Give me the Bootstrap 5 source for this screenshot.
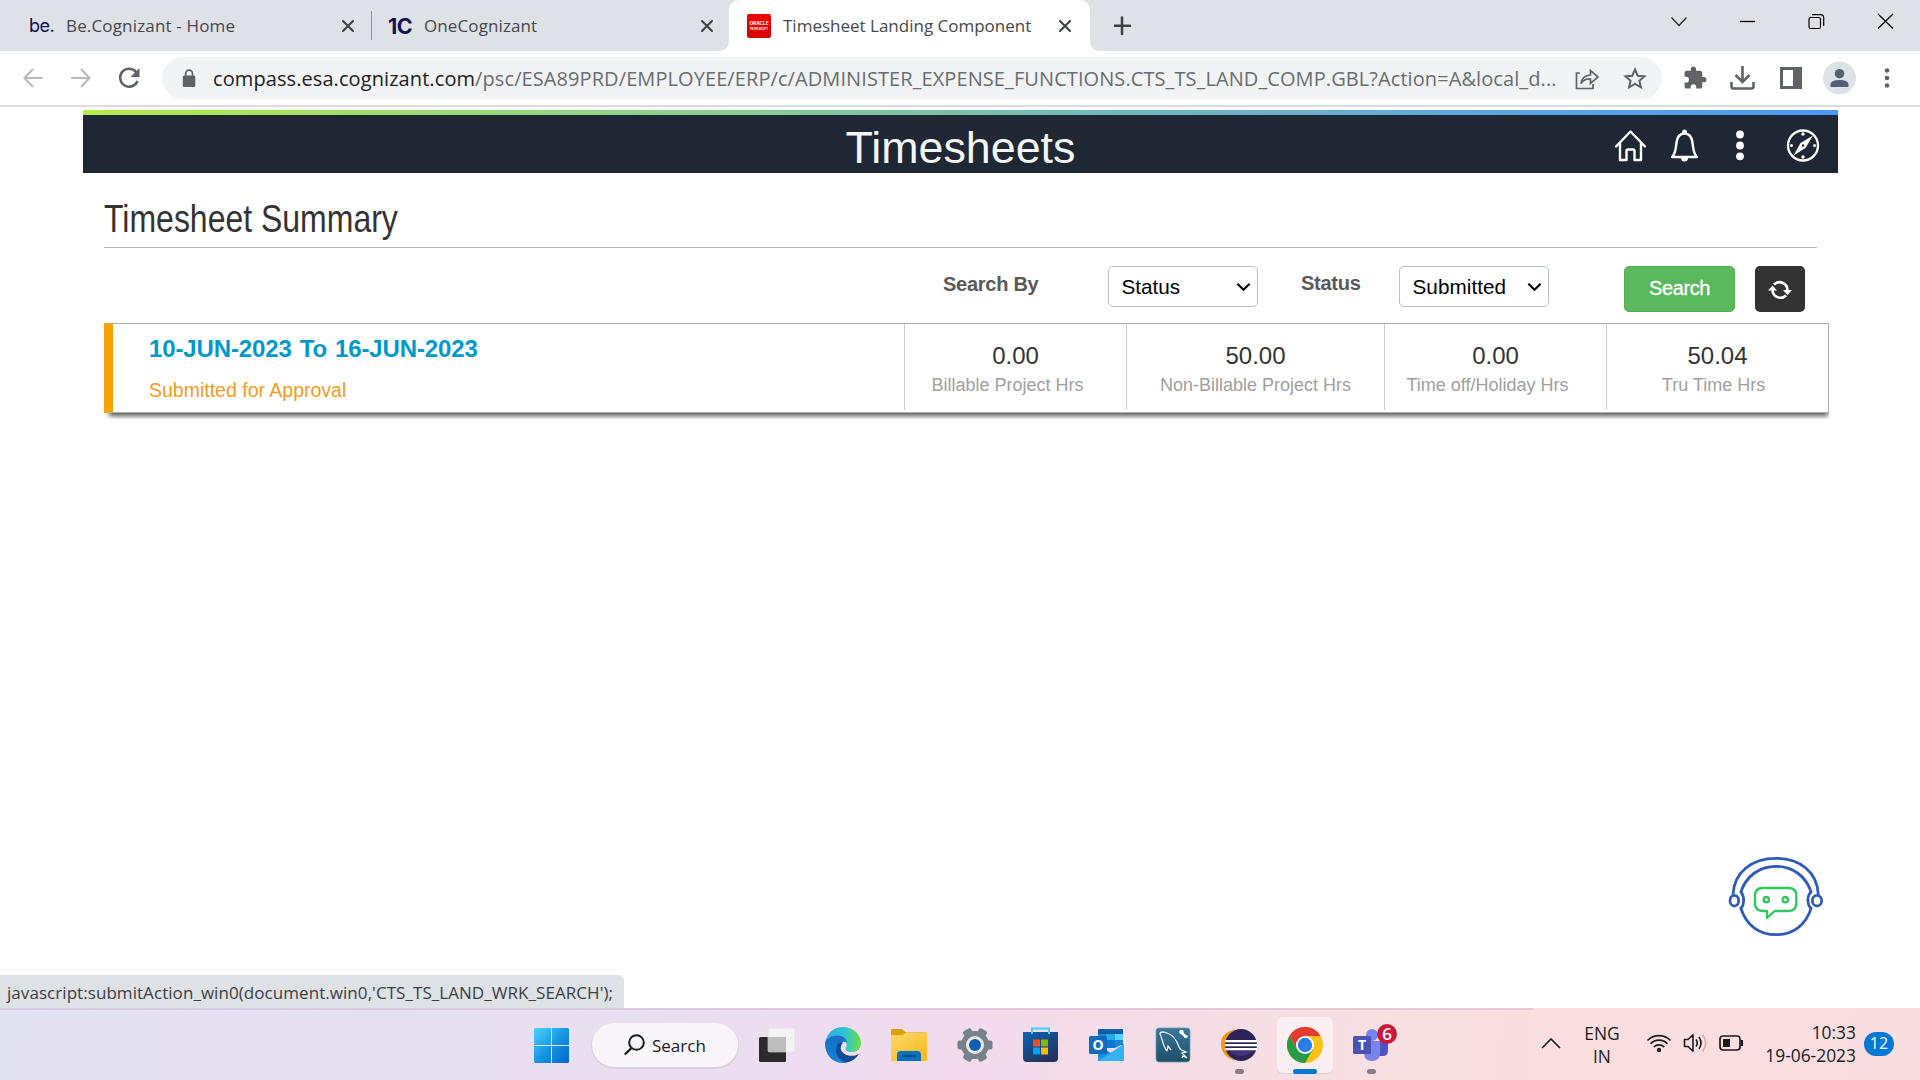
<!DOCTYPE html>
<html lang="en">
<head>
<meta charset="utf-8">
<title>Timesheet Landing Component</title>
<link href="https://cdn.jsdelivr.net/npm/bootstrap@5.3.0/dist/css/bootstrap.min.css" rel="stylesheet">
<style>
:root{--ui:"Open Sans","Noto Sans",sans-serif;--arial:"Liberation Sans",Arial,sans-serif}
body{width:1920px;height:1080px;overflow:hidden;background:#fff;font-family:var(--arial);line-height:1;white-space:nowrap}
svg{display:block;flex:none}
.ln{display:block;flex:none}
/* browser tabs */
.tabstrip{height:51px;background:#dee1e6;font-family:var(--ui);font-size:17px;color:#45484c}
.tab{height:51px;line-height:50px;flex:none}
.tab-a{width:371px;padding:0 15px 0 29px}
.tab-a .ttl{letter-spacing:.16px}
.tab-b{width:358px;padding:0 15px 0 16px}
.tab-b .ttl{letter-spacing:.1px}
.tab-c{width:361px;padding:0 17px 0 18px;background:#fff;border-radius:10px 10px 0 0;position:relative;margin-left:-1px}
.tab-c::before,.tab-c::after{content:"";position:absolute;bottom:0;width:9px;height:9px}
.tab-c::before{left:-9px;background:radial-gradient(circle at 0 0,transparent 8.5px,#fff 9px)}
.tab-c::after{right:-9px;background:radial-gradient(circle at 100% 0,transparent 8.5px,#fff 9px)}
.tabsep{width:1px;height:29px;background:#8e9196;flex:none}
.logo-be{font-family:Inter,sans-serif;font-size:18px;letter-spacing:-.5px;color:#0a0a55;width:37px;flex:none}
.logo-1c{font-family:Inter,sans-serif;font-weight:700;font-size:21.5px;letter-spacing:-.6px;color:#14124f;width:36px;flex:none}
.fav{width:24px;height:24px;border-radius:2px;background:linear-gradient(#f30000,#d60000);color:#fff;margin-right:12px;flex:none}
.winbtn{width:69px;height:42px;flex:none}
/* toolbar */
.toolbar{height:56px;border-bottom:2px solid #dadce0;padding-left:9px;padding-right:9px}
.tb-btn{width:48px;flex:none}
.omni{width:1500px;height:42px;border-radius:21px;background:#f1f3f4;margin-left:9px;padding-left:19px;padding-right:3px;font-family:var(--ui);font-size:20px;color:#6a6d71}
.omni b{font-weight:400;color:#202124}
.url{letter-spacing:.085px;line-height:40px;padding-top:1px}
/* page header */
.pshead{margin:3px 82px 0 83px;height:63px;background:#1e2733;border-top:5px solid transparent;border-image:linear-gradient(90deg,#b4ec4b,#8ed08a 32%,#6fb3c4 64%,#4b97ff) 1;position:relative}
.pshead h1{font-size:44.8px;line-height:58px;color:#f5f5f5;margin:0;padding-top:3px}
.hdicons{position:absolute;right:18px;top:1px;height:58px}
.wrapper{padding:0 91px 0 104px}
.sumtitle{height:75px;width:1713px;border-bottom:1px solid #b4b4b8;color:#333}
.sumtitle h2{font-size:39px;line-height:44px;margin:0;padding-top:24px;transform:scaleX(.82);transform-origin:0 0;display:inline-block}
.filters{height:75px;padding-top:18px;padding-left:839px;font-size:20px;color:#000}
.flabel{font-weight:700;color:#595959;line-height:36px;letter-spacing:-.27px}
.flabel-by{width:165px}
.flabel-st{width:98px;margin-left:43px;line-height:34px}
.fsel{width:150px;height:41px;border:1px solid #b9c0ca;border-radius:5px;padding:0 6px 0 12.500px;line-height:39px;background:#fff;color:#000;font-size:20.7px}
.fsel .clip{overflow:hidden;width:99.500px;letter-spacing:.05px}
.btn-find{width:111px;height:46px;margin-left:75px;background:#5cb85c;border:1px solid #4cae4c;border-radius:5px;color:#fff;font-size:20px;line-height:1;padding:0 0 2px;-webkit-text-stroke:.3px #fff;letter-spacing:-.4px}
.btn-again{width:50px;height:46px;margin-left:20px;background:#333;border-radius:5px;border:0;padding:2px 0 0}
.tscard{width:1725px;height:90px;border:1px solid #adadb0;border-left:9px solid #f5a206;box-shadow:2px 6px 5px -3px #555;clip-path:inset(0 0 -6px 0)}
.period{width:791px;padding-left:36px;flex:none}
.period .dates{font-size:24px;font-weight:700;color:#09c;line-height:28px;padding-top:11px;letter-spacing:-.13px;word-spacing:1.500px}
.period .state{font-size:19.5px;color:#f39c1e;line-height:22px;padding-top:16px}
.hrs{border-left:1px solid #ccc;height:86px;text-align:center;flex:none;width:222px}
.hrs-w{width:258px}
.hrs .num{font-size:24px;color:#333;line-height:28px;padding-top:18px}
.hrs .cap{font-size:18px;color:#a0a0a0;line-height:22px;padding-top:4px}
.off-l{padding-right:16px}
.off-s{padding-right:8px}
.bot{position:absolute;left:1700px;top:840px}
.statusbub{position:absolute;left:0;top:975px;width:624px;height:33px;background:#dee1e5;border-top-right-radius:6px;font-family:var(--ui);font-size:17px;line-height:35px;color:#3c4043;padding-left:7px;letter-spacing:.06px}
/* taskbar */
.taskbar{position:absolute;left:0;top:1008px;width:1920px;height:72px;padding-left:534px;background:linear-gradient(97deg,#e3e2f3 0,#e6dff2 20%,#e8dff0 33%,#eedcf0 43%,#f3dbec 50%,#f4dde6 60%,#f7dfe2 72%,#fbdee0 84%,#f9dee1 100%);font-family:var(--ui);color:#1b1b1b}
.taskbar::before{content:"";position:absolute;left:0;top:0;width:1533px;height:2px;background:rgba(120,80,130,.14)}
.tkrow{margin-left:14px}
.tk{width:66px;height:72px;padding-top:2px;flex:none;position:relative}
.dn{margin-top:2px}
.pill{width:146px;height:44px;border-radius:22px;background:#f8f5fb;box-shadow:0 1px 0 1px #dccfe4;margin:2px 21px 0 23px;padding-left:32px;font-size:17px;flex:none}
.pill span{line-height:44px;padding-top:2px}
.run{position:absolute;left:29px;bottom:6px;width:9px;height:5px;border-radius:3px;background:#8b7c83}
.run-on{left:21px;width:24px;background:#0078d4}
.activebox{width:56px;height:56px;border-radius:6px;background:#fbeff3;box-shadow:0 1px 1px #e0ccd4}
.tbadge{position:absolute;left:39px;top:16px;width:20px;height:20px;border-radius:50%;background:#c9183c;color:#fff;font-size:17px;font-weight:600;line-height:19px;text-align:center}
.tray{font-size:17.4px;line-height:23px;margin-left:137px}
.lang{width:40px;margin-left:21px;padding-top:1px}
.tri{position:relative;top:-1px}
.clock{width:111px}
.notif{width:30px;height:24px;border-radius:12px;margin-left:8px;background:#0078d4;color:#fff;font-size:16px;line-height:23px;text-align:center}
</style>
<script src="https://cdn.jsdelivr.net/npm/bootstrap@5.3.0/dist/js/bootstrap.bundle.min.js"></script>
</head>
<body class="position-relative">
<svg width="0" height="0" class="position-absolute"><defs>
<symbol id="x" viewBox="0 0 16 16"><path d="M3 3L13 13M13 3L3 13" stroke="#3c4043" stroke-width="2.1" fill="none" stroke-linecap="round"/></symbol>
<symbol id="chev" viewBox="0 0 16 10"><path d="M1.5 1.5L8 8L14.5 1.5" stroke="#000" stroke-width="2.2" fill="none"/></symbol>
</defs></svg>

<div class="tabstrip d-flex align-items-start">
  <div class="tab tab-a d-flex align-items-center"><span class="logo-be">be.</span><span class="ttl">Be.Cognizant - Home</span><svg class="ms-auto" width="16" height="16"><use href="#x"/></svg></div>
  <div class="tabsep align-self-center"></div>
  <div class="tab tab-b d-flex align-items-center"><span class="logo-1c">1C</span><span class="ttl">OneCognizant</span><svg class="ms-auto" width="16" height="16"><use href="#x"/></svg></div>
  <div class="tab tab-c d-flex align-items-center"><svg class="fav" viewBox="0 0 24 24" fill="#fff" font-family="Inter" font-size="4.600" font-weight="700" text-anchor="middle"><text x="12" y="10.500" textLength="19" lengthAdjust="spacingAndGlyphs">ORACLE</text><text x="12" y="16" font-size="3.600" textLength="18" lengthAdjust="spacingAndGlyphs">PEOPLESOFT</text></svg><span>Timesheet Landing Component</span><svg class="ms-auto" width="16" height="16"><use href="#x"/></svg></div>
  <svg width="20" height="51" class="ms-4" viewBox="0 0 20 51"><path d="M8 17.500V34M0 25.700H16" stroke="#3c4043" stroke-width="2.500" stroke-linecap="round"/></svg>
  <div class="d-flex ms-auto">
    <svg class="winbtn" viewBox="0 0 69 42"><path d="M27.500 17.500L35 25.500L42.500 17.500" fill="none" stroke="#222" stroke-width="1.2"/></svg>
    <svg class="winbtn" viewBox="0 0 69 42"><path d="M27 21.500H42" stroke="#000" stroke-width="1.3"/></svg>
    <svg class="winbtn" viewBox="0 0 69 42"><g fill="none" stroke="#000" stroke-width="1.2"><rect x="27" y="17.500" width="11.500" height="11" rx="1.800"/><path d="M30 14.600H38.500Q41.700 14.600 41.700 18V26"/></g></svg>
    <svg class="winbtn" viewBox="0 0 69 42"><path d="M27 14L42 28.500M42 14L27 28.500" stroke="#000" stroke-width="1.2"/></svg>
  </div>
</div>

<div class="toolbar d-flex align-items-center">
  <svg class="tb-btn" height="54" viewBox="0 0 48 54"><path d="M34 27H16M24 18L15.500 27L24 36" fill="none" stroke="#babcbe" stroke-width="2.2"/></svg>
  <svg class="tb-btn" height="54" viewBox="0 0 48 54"><path d="M14 27H32M24 18L32.500 27L24 36" fill="none" stroke="#babcbe" stroke-width="2.2"/></svg>
  <svg class="tb-btn" height="54" viewBox="0 0 48 54"><path d="M31.500 21.500A9 9 0 1 0 32.500 30" fill="none" stroke="#5f6368" stroke-width="2.500"/><path d="M34.500 17V26H25.500Z" fill="#5f6368"/></svg>
  <div class="omni d-flex align-items-center">
    <svg width="32" height="42" viewBox="0 0 32 42"><rect x="1.800" y="18.500" width="12.500" height="11.500" rx="1.500" fill="#5f6368"/><path d="M4.700 19V16.500A3.400 3.400 0 0 1 11.500 16.500V19" fill="none" stroke="#5f6368" stroke-width="1.700"/></svg>
    <span class="url"><b>compass.esa.cognizant.com</b>/psc/ESA89PRD/EMPLOYEE/ERP/c/ADMINISTER_EXPENSE_FUNCTIONS.CTS_TS_LAND_COMP.GBL?Action=A&amp;local_d...</span>
    <svg class="ms-auto" width="48" height="42" viewBox="0 0 48 42"><g fill="none" stroke="#5f6368" stroke-width="1.700"><path d="M17 16H13.500V31.500H30V27"/><path d="M18 26.500Q19 18.500 27.500 18V13.500L35 20L27.500 26.500V22Q21.500 21.500 18 26.500Z"/></g></svg>
    <svg width="48" height="42" viewBox="0 0 48 42"><path d="M24 12.500L26.700 18.700L33.500 19.300L28.400 23.800L29.900 30.300L24 26.900L18.100 30.300L19.600 23.800L14.500 19.300L21.300 18.700Z" fill="none" stroke="#5f6368" stroke-width="2"/></svg>
  </div>
  <svg width="48" height="42" class="ms-2" viewBox="0 0 48 42"><path transform="translate(12.500 8.500) scale(1.040 1.050)" d="M20.500 11H19V7c0-1.100-.9-2-2-2h-4V3.500a2.500 2.500 0 0 0-5 0V5H4c-1.100 0-2 .9-2 2v3.800h1.500a2.700 2.700 0 0 1 0 5.400H2V20c0 1.100.9 2 2 2h3.800v-1.500a2.700 2.700 0 0 1 5.400 0V22H17c1.100 0 2-.9 2-2v-4h1.500a2.500 2.500 0 0 0 0-5z" fill="#5f6368"/></svg>
  <svg width="48" height="42" viewBox="0 0 48 42"><path d="M24.500 9V24M17.500 18L24.500 25L31.500 18M13.500 25V29.500Q13.500 31.500 15.500 31.500H33.500Q35.500 31.500 35.500 29.500V25" fill="none" stroke="#5f6368" stroke-width="2.600"/></svg>
  <svg width="48" height="42" viewBox="0 0 48 42"><path d="M14 10H36V32H14ZM17 13V29H27V13Z" fill="#5f6368" fill-rule="evenodd"/></svg>
  <svg width="48" height="42" viewBox="0 0 48 42"><circle cx="25.500" cy="21" r="16.500" fill="#dee1e6"/><circle cx="25.500" cy="16.700" r="4.800" fill="#565e71"/><path d="M16.500 30V27.500Q16.500 23 25.500 23T34.500 27.500V30Z" fill="#565e71"/></svg>
  <svg width="48" height="42" viewBox="0 0 48 42"><g fill="#5f6368"><circle cx="25" cy="13.500" r="2.300"/><circle cx="25" cy="21" r="2.300"/><circle cx="25" cy="28.500" r="2.300"/></g></svg>
</div>

<header class="pshead">
  <h1 class="text-center fw-normal">Timesheets</h1>
  <div class="hdicons d-flex align-items-center">
    <svg width="33" height="33" viewBox="0 0 33 33" style="margin-right:23px"><path d="M2 17.500L16.500 2.500L31 17.500M6 14V31H12.500V22Q12.500 20.500 14 20.500H19Q20.500 20.500 20.500 22V31H27V14" fill="none" stroke="#fff" stroke-width="2.400" stroke-linejoin="round" stroke-linecap="round"/></svg>
    <svg width="29" height="33" viewBox="0 0 29 33" style="margin-right:36px"><path d="M2 28C6 24 5.500 20 6.500 13.500C7.500 6.500 10.500 4.500 14.500 4.500S21.500 6.500 22.500 13.500C23.500 20 23 24 27 28Z" fill="none" stroke="#fff" stroke-width="2.400" stroke-linejoin="round"/><circle cx="14.500" cy="3" r="2.500" fill="#fff"/><path d="M11 29A3.500 3.500 0 0 0 18 29Z" fill="#fff"/></svg>
    <svg width="9" height="33" viewBox="0 0 9 33" style="margin-right:42px"><g fill="#fff"><circle cx="5" cy="5.500" r="3.900"/><circle cx="5" cy="16.500" r="3.900"/><circle cx="5" cy="27.300" r="3.900"/></g></svg>
    <svg width="34" height="34" viewBox="0 0 34 34"><circle cx="17" cy="17.500" r="15" fill="none" stroke="#fff" stroke-width="2.300"/><path d="M27 7.500L19.500 20L7.500 27.500L14.500 15Z" fill="#fff"/><circle cx="17" cy="17.500" r="1.200" fill="#1e2733"/><g fill="#fff"><circle cx="17" cy="6" r="1.700"/><circle cx="17" cy="29" r="1.700"/><circle cx="5.500" cy="17.500" r="1.500"/><circle cx="28.500" cy="17.500" r="1.500"/></g></svg>
  </div>
</header>

<main class="wrapper">
  <div class="sumtitle"><h2 class="fw-normal">Timesheet Summary</h2></div>
  <div class="filters d-flex align-items-start">
    <div class="flabel flabel-by">Search By</div>
    <div class="fsel d-flex align-items-center justify-content-between"><span class="ln">Status</span><svg width="15" height="10"><use href="#chev"/></svg></div>
    <div class="flabel flabel-st">Status</div>
    <div class="fsel d-flex align-items-center justify-content-between"><span class="ln clip">Submitted for Approval</span><svg width="15" height="10"><use href="#chev"/></svg></div>
    <button class="btn btn-find">Search</button>
    <button class="btn btn-again d-flex align-items-center justify-content-center"><svg width="26" height="26" viewBox="0 0 26 26"><path d="M7 7.500A8 8 0 0 1 20.500 13.500M19 18.500A8 8 0 0 1 5.500 13" fill="none" stroke="#fff" stroke-width="2.600"/><path d="M1 13.500L5.500 8.500L10 13.500ZM16 13H25L20.500 18Z" fill="#fff"/></svg></button>
  </div>
  <div class="tscard d-flex">
    <div class="period"><div class="dates">10-JUN-2023 To 16-JUN-2023</div><div class="state">Submitted for Approval</div></div>
    <div class="hrs"><div class="num">0.00</div><div class="cap off-l">Billable Project Hrs</div></div>
    <div class="hrs hrs-w"><div class="num">50.00</div><div class="cap">Non-Billable Project Hrs</div></div>
    <div class="hrs"><div class="num">0.00</div><div class="cap off-l">Time off/Holiday Hrs</div></div>
    <div class="hrs"><div class="num">50.04</div><div class="cap off-s">Tru Time Hrs</div></div>
  </div>
</main>

<svg class="bot" width="150" height="120" viewBox="0 0 450 360"><g fill="none" stroke="#2f5bb5" stroke-width="8.500"><path d="M99 164C102 96 156 55 228 55S352 96 355 164"/><path d="M122 158C138 108 178 79 228 79S318 108 334 158M122 203C138 256 178 284 228 284S318 256 334 203"/><path d="M121 155C134 165 134 196 121 206M335 155C320 165 320 196 335 206"/><ellipse cx="103" cy="182" rx="13" ry="16"/><ellipse cx="351" cy="182" rx="14" ry="16"/></g><g fill="none" stroke="#31c75f" stroke-width="7"><path d="M188 144H266Q289 144 289 167V190Q289 213 266 213H224L201 234V213H188Q165 213 165 190V167Q165 144 188 144Z" stroke-linejoin="round"/><circle cx="199" cy="179" r="8"/><circle cx="256" cy="179" r="8"/></g></svg>

<div class="statusbub">javascript:submitAction_win0(document.win0,'CTS_TS_LAND_WRK_SEARCH');</div>

<footer class="taskbar d-flex align-items-center">
  <svg class="dn" width="35" height="35" viewBox="0 0 35 35"><defs><linearGradient id="w" gradientUnits="userSpaceOnUse" x1="0" y1="0" x2="35" y2="35"><stop offset="0" stop-color="#4fd4ff"/><stop offset=".5" stop-color="#1796e4"/><stop offset="1" stop-color="#0067c8"/></linearGradient></defs><path d="M1 0H17V17H0V1ZM18 0H34L35 1V17H18ZM0 18H17V35H1L0 34ZM18 18H35V34L34 35H18Z" fill="url(#w)"/></svg>
  <div class="pill d-flex align-items-center"><svg width="28" height="44" viewBox="0 0 28 44"><circle cx="12.500" cy="19.500" r="7.300" fill="none" stroke="#1b1b1b" stroke-width="2"/><path d="M7.500 25L.8 31.500" stroke="#1b1b1b" stroke-width="2.200"/></svg><span>Search</span></div>
  <svg class="dn" width="37" height="35" viewBox="0 0 37 35"><rect x="0" y="9" width="27" height="25" rx="1.500" fill="#2a2a2a"/><rect x="9" y="0" width="27" height="24" rx="1.500" fill="#f4f4f4" stroke="#ddd" stroke-width=".6"/><rect x="9" y="9" width="18" height="15" fill="#bdbdbd"/></svg>
  <div class="tkrow d-flex">
  <div class="tk d-flex align-items-center justify-content-center"><svg width="36" height="36" viewBox="0 0 36 36"><defs><linearGradient id="e1"><stop offset="0" stop-color="#2fb1ec"/><stop offset=".55" stop-color="#2cc3d0"/><stop offset="1" stop-color="#6be13f"/></linearGradient><linearGradient id="e2" x1="0" y1="0" x2="0" y2="1"><stop offset="0" stop-color="#1b6fc4"/><stop offset="1" stop-color="#0a84dc"/></linearGradient></defs><path d="M0 17C1 7 8 0 18 0C29 0 36 8 36 16C36 22 32 25 27 25C22 25 20 23 21 21C23 17 20 10 12 10C6 10 1 13 0 17Z" fill="url(#e1)"/><path d="M0 17C0 12 6 8.500 12 8.500C18 8.500 22 12 22 16C19 13 14 16 14 21C14 28 20 33 26 33C23 35 20 36 18 36C8 36 0 28 0 17Z" fill="url(#e2)"/><path d="M14 16C9 21 10 31 20 35.500C26 35 31 32 34 27C27 31 18 28 16 23C15 20 17 17 18 15Z" fill="#104a91"/></svg></div>
  <div class="tk d-flex align-items-center justify-content-center"><svg width="36" height="34" viewBox="0 0 36 34"><defs><linearGradient id="f" x1="0" y1="0" x2="1" y2="1"><stop offset="0" stop-color="#ffd869"/><stop offset="1" stop-color="#f9b71c"/></linearGradient></defs><path d="M0 2Q0 1 1 1H11L15 4.500H35Q36 4.500 36 5.500V12H0Z" fill="#dda006"/><path d="M0 7H11L15 5H36V32Q36 33 35 33H1Q0 33 0 32Z" fill="url(#f)"/><path d="M6 33V27Q6 23 10 23H26Q30 23 30 27V33Z" fill="#0b6fc0"/><path d="M11 28H25" stroke="#064a8a" stroke-width="2"/></svg></div>
  <div class="tk d-flex align-items-center justify-content-center"><svg width="38" height="36" viewBox="-19 -18 38 36"><g fill="#77818a"><rect x="-4.500" y="-17.500" width="9" height="35" rx="2" transform="rotate(30)"/><rect x="-4.500" y="-17.500" width="9" height="35" rx="2" transform="rotate(90)"/><rect x="-4.500" y="-17.500" width="9" height="35" rx="2" transform="rotate(150)"/><circle r="14"/></g><circle r="9" fill="#e4e8ec"/><circle r="6" fill="#0f5db0"/></svg></div>
  <div class="tk d-flex align-items-center justify-content-center"><svg width="36" height="36" viewBox="0 0 36 36"><defs><linearGradient id="s" x1="0" y1="0" x2=".6" y2="1"><stop offset="0" stop-color="#0a63b4"/><stop offset="1" stop-color="#24335f"/></linearGradient></defs><path d="M0 5H35V31Q35 35 31 35H4Q0 35 0 31Z" fill="url(#s)"/><path d="M9 7V1.500H26V7" fill="none" stroke="#3fd0f5" stroke-width="2"/><path d="M10 12.500H17V19.500H10Z" fill="#f25022"/><path d="M18 12.500H25V19.500H18Z" fill="#7fba00"/><path d="M10 20.500H17V27.500H10Z" fill="#00a4ef"/><path d="M18 20.500H25V27.500H18Z" fill="#ffb900"/></svg></div>
  <div class="tk d-flex align-items-center justify-content-center"><svg width="36" height="34" viewBox="0 0 36 34"><path d="M9 2Q9 1 10 1H34V17H9Z" fill="#0a5ea8"/><path d="M9 6H17V17H9Z" fill="#1a86d6"/><path d="M17 6H26V17H17Z" fill="#28a8ea"/><path d="M26 6H34V13H26Z" fill="#5ad0fb"/><path d="M17 12H26V20H17Z" fill="#0a78d0"/><path d="M26 12H34V16L26 20Z" fill="#1a86d6"/><path d="M35 16V33H9V17L22 25Z" fill="#1f8fe4"/><path d="M35 16L9 33H34Q35 33 35 32Z" fill="#35b2f0"/><rect x="0" y="8" width="18" height="18" rx="1.500" fill="#0f6cbd"/><text x="9" y="22" font-family="Open Sans" font-size="14" font-weight="700" fill="#fff" text-anchor="middle">O</text></svg></div>
  <div class="tk d-flex align-items-center justify-content-center"><svg width="36" height="36" viewBox="0 0 36 36"><defs><linearGradient id="my" x1="0" y1="0" x2="0" y2="1"><stop offset="0" stop-color="#36779b"/><stop offset="1" stop-color="#1d4f69"/></linearGradient></defs><rect x="1" y="1" width="34" height="34" rx="3" fill="url(#my)" stroke="#7a98a8" stroke-width=".8"/><path d="M12 24C8 20 8 13 5 7C5 4 9 5 12 6C19 8 22 14 24 20C25 23 28 24 31 25L27 26L32 31L28 29L27 31M12 24L13 19L16 23" fill="none" stroke="#e8f2f6" stroke-width="1.300"/><path d="M26 5L31 10" stroke="#fff" stroke-width="2.500"/><circle cx="26.500" cy="5" r="2.200" fill="#fff"/><circle cx="31" cy="9.500" r="1.800" fill="#fff"/></svg></div>
  <div class="tk d-flex align-items-center justify-content-center"><svg width="36" height="34" viewBox="0 0 36 34"><path d="M15 1Q-1 5 0 17T15 33Q5 28 5 17T15 1Z" fill="#f7941e"/><circle cx="20" cy="17" r="16" fill="#2c2255"/><path d="M8 23Q20 33 32 23Z" fill="#44337e"/><g fill="#fff"><rect x="4" y="12" width="32" height="2.300"/><rect x="4" y="16" width="32" height="2.300"/><rect x="4" y="20" width="32" height="2.300"/></g></svg><i class="run"></i></div>
  <div class="tk d-flex align-items-center justify-content-center"><div class="activebox d-flex align-items-center justify-content-center"><svg width="36" height="36" viewBox="-18 -18 36 36"><circle r="18" fill="#fbc116"/><path d="M-15.600 -9A18 18 0 0 1 15.600 -9H0L-7.800 4.500Z" fill="#e33b2e"/><path d="M-15.600 -9A18 18 0 0 0 0 18L7.800 4.500L-7.800 4.500Z" fill="#259a48"/><circle r="9" fill="#fff"/><circle r="7.200" fill="#2a7de9"/></svg></div><i class="run run-on"></i></div>
  <div class="tk d-flex align-items-center justify-content-center"><svg width="36" height="34" viewBox="0 0 36 34"><path d="M26 13H35V22Q35 28 30 28H26Z" fill="#4d55c4"/><circle cx="19" cy="7" r="6" fill="#7b83eb"/><path d="M11 13H27V25Q27 33 19 33T11 25Z" fill="#7b83eb"/><rect x="0" y="8" width="18" height="18" rx="1.500" fill="#4a52b8"/><text x="9" y="22" font-family="Open Sans" font-size="14" font-weight="700" fill="#fff" text-anchor="middle">T</text></svg><span class="tbadge">6</span><i class="run"></i></div>
  </div>
  <div class="tray d-flex align-items-center">
    <svg width="20" height="12" viewBox="0 0 20 12"><path d="M1 10L10 1L19 10" fill="none" stroke="#1b1b1b" stroke-width="1.600"/></svg>
    <div class="lang text-center">ENG<br>IN</div>
    <svg class="tri" width="26" height="20" viewBox="0 0 26 20" style="margin-left:24px"><g fill="none" stroke="#1b1b1b" stroke-width="1.700"><path d="M1.500 7.500A16 16 0 0 1 24.500 7.500"/><path d="M4.500 10.800A11.500 11.500 0 0 1 21.500 10.800"/><path d="M7.800 14A7.300 7.300 0 0 1 18.200 14"/></g><circle cx="13" cy="17" r="2.200" fill="#1b1b1b"/></svg>
    <svg class="tri" width="26" height="20" viewBox="0 0 26 20" style="margin-left:11px"><g fill="none" stroke="#1b1b1b" stroke-width="1.600"><path d="M1.500 6.500H5L10 1.800V18.200L5 13.500H1.500Z" stroke-linejoin="round"/><path d="M13 6.500Q15.500 10 13 13.500M16 4Q20 10 16 16"/><path d="M19.500 1.500Q26 10 19.500 18.500" stroke="#c9b3b8"/></g></svg>
    <svg class="tri" width="26" height="20" viewBox="0 0 26 20" style="margin-left:10px"><rect x="1" y="3" width="20" height="14" rx="3" fill="none" stroke="#1b1b1b" stroke-width="1.700"/><rect x="4" y="6" width="7" height="8" fill="#1b1b1b"/><path d="M22 7H24V13H22Z" fill="#1b1b1b"/></svg>
    <div class="clock text-end">10:33<br>19-06-2023</div>
    <div class="notif">12</div>
  </div>
</footer>
</body>
</html>
